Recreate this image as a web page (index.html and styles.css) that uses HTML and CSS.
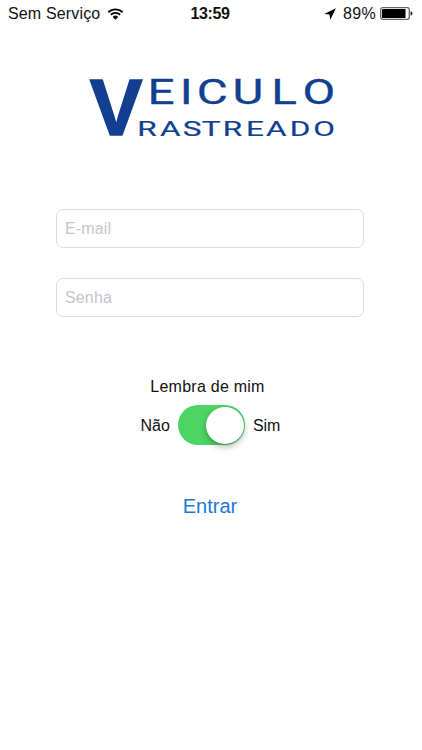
FILE: index.html
```
<!DOCTYPE html>
<html lang="pt-BR">
<head>
  <meta charset="UTF-8">
  <title>Veiculo Rastreado</title>
  <link rel="stylesheet" href="styles.css">
</head>
<body>

<header class="status">
  <div class="status-esq">
    <span class="operadora">Sem Serviço</span>
    <svg class="wifi" width="17" height="12" viewBox="0 0 16 12">
      <path d="M0.8 4.2 A10.5 10.5 0 0 1 15.2 4.2 M3.3 6.8 A6.8 6.8 0 0 1 12.7 6.8" fill="none" stroke="#000" stroke-width="1.9"/>
      <path d="M5.2 8.9 A4.1 4.1 0 0 1 10.8 8.9 L8 11.7 Z"/>
    </svg>
  </div>
  <span class="hora">13:59</span>
  <div class="status-dir">
    <svg class="local" width="12" height="12" viewBox="0 0 12 12">
      <path d="M11.9 0.3 L0.2 6.1 L5.5 6.6 L6.3 11.8 Z"/>
    </svg>
    <span class="carga">89%</span>
    <svg class="bateria" width="33" height="13" viewBox="0 0 33 13">
      <rect x="0.7" y="0.7" width="28.6" height="11.6" rx="2" fill="#fff" stroke="#666" stroke-width="1.3"/>
      <rect x="2" y="2" width="23.5" height="9" rx="0.4"/>
      <path d="M30.6 4.3 Q32.5 4.8 32.5 6.5 Q32.5 8.2 30.6 8.7 Z" fill="#222"/>
    </svg>
  </div>
</header>

<main class="login">
  <svg class="logo" width="246" height="60" viewBox="0 0 246 60">
    <text class="logo-v" x="1.8" y="57.3">V</text>
    <text class="logo-nome" transform="scale(1.38 1)" x="43.2 66.4 78.8 104.8 132.8 155.4" y="26.3">EICULO</text>
    <text class="logo-sub" transform="scale(1.5 1)" x="32.8 48 63.2 75.8 89.9 105.4 118.6 134.5 150.1" y="57.8">RASTREADO</text>
  </svg>

  <form class="formulario">
    <input class="campo" type="email" placeholder="E-mail">
    <input class="campo" type="password" placeholder="Senha">

    <div class="lembrar">
      <span class="titulo">Lembra de mim</span>
      <div class="opcoes">
        <span class="opcao">Não</span>
        <label class="chave">
          <input type="checkbox" checked>
          <span class="bola"></span>
        </label>
        <span class="opcao">Sim</span>
      </div>
    </div>

    <button class="entrar" type="button">Entrar</button>
  </form>
</main>

</body>
</html>
```
FILE: styles.css
```
* {
  box-sizing: border-box;
}

body {
  margin: 0;
  height: 100vh;
  background-color: #fff;
  color: #111;
  font-family: "Liberation Sans", Arial, sans-serif;
}

.status {
  display: grid;
  grid-template-columns: 1fr auto 1fr;
  height: 27px;
  padding: 0 9px 0 8px;
  align-items: center;
  font-size: 16px;
  line-height: 27px;
}

.status-esq, .status-dir {
  display: flex;
  align-items: center;
}

.status-dir {
  justify-content: flex-end;
}

.operadora {
  letter-spacing: 0.15px;
}

.wifi {
  margin-left: 7px;
}

.hora {
  margin-right: 1px;
  font-weight: bold;
  letter-spacing: -0.4px;
}

.local {
  margin-right: 7px;
}

.carga {
  margin-right: 4px;
  letter-spacing: 0.3px;
}

.login {
  display: flex;
  flex-direction: column;
  align-items: center;
}

.logo {
  display: block;
  margin-top: 51px;
  fill: #123f8f;
  stroke: #123f8f;
  overflow: visible;
}

.logo-v {
  font-size: 79px;
  font-weight: bold;
  stroke-width: 1.6px;
}

.logo-nome {
  font-family: Roboto, sans-serif;
  font-size: 34.5px;
  stroke-width: 0.3px;
}

.logo-sub {
  font-family: Roboto, sans-serif;
  font-size: 21px;
  stroke-width: 0.2px;
}

.formulario {
  display: flex;
  flex-direction: column;
  align-items: center;
  width: 308px;
  margin-top: 71px;
  margin-right: 2px;
}

.campo {
  width: 100%;
  height: 39px;
  margin-bottom: 30px;
  padding: 0 8px;
  border: 1px solid #dcdcdc;
  border-radius: 7px;
  background-color: #fff;
  font-family: inherit;
  font-size: 16px;
  letter-spacing: 0.15px;
}

.campo::placeholder {
  color: #c5c5ca;
}

.lembrar {
  display: flex;
  flex-direction: column;
  align-items: center;
  margin-top: 30px;
  font-size: 16px;
}

.titulo {
  padding-right: 5px;
  line-height: 20px;
  letter-spacing: 0.25px;
}

.opcoes {
  display: flex;
  align-items: center;
  gap: 8px;
  margin-top: 8px;
  padding-left: 1px;
}

.opcao {
  padding-top: 2px;
}

.chave {
  display: flex;
  justify-content: flex-end;
  align-items: center;
  width: 67px;
  height: 40px;
  padding-right: 1px;
  border-radius: 20px;
  background-color: #4cd564;
}

.chave input {
  display: none;
}

.bola {
  width: 38px;
  height: 37px;
  border-radius: 50%;
  background-color: #fff;
  box-shadow: 0 3px 6px rgba(0, 0, 0, 0.3);
}

.entrar {
  margin-top: 48px;
  padding: 0;
  border: none;
  background: none;
  color: #1a78d6;
  font-family: inherit;
  font-size: 20px;
  line-height: 26px;
}
```
